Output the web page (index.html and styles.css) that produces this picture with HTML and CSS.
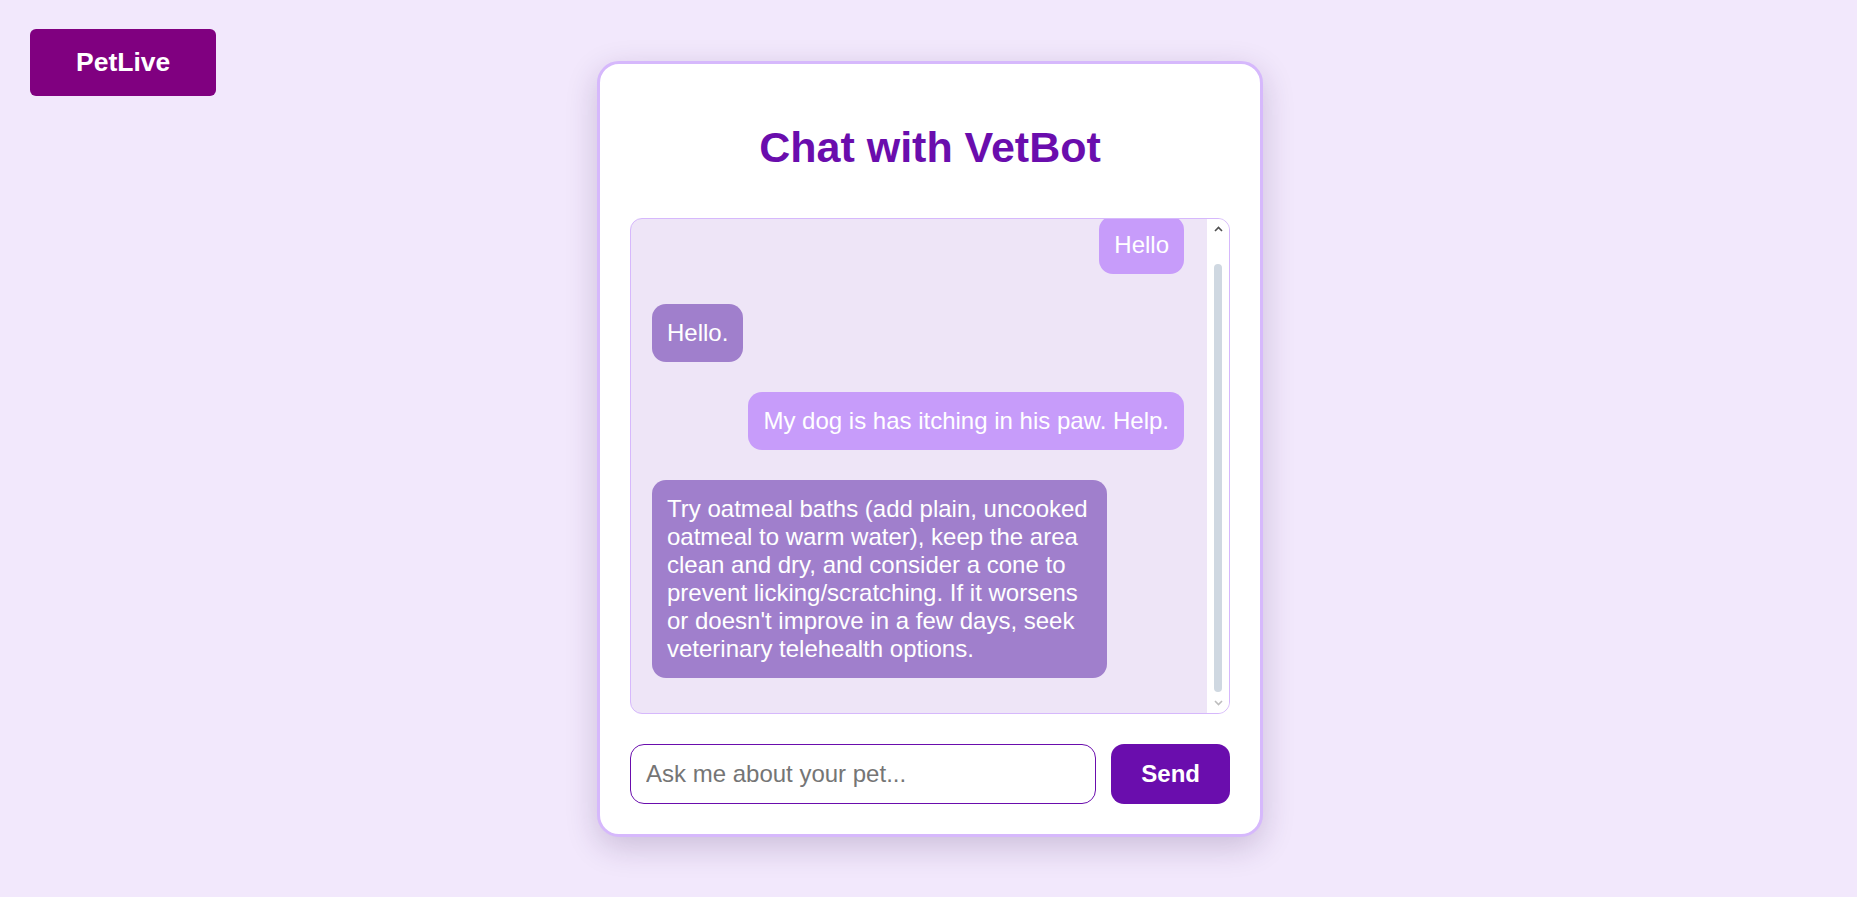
FILE: index.html
```html
<!DOCTYPE html>
<html lang="en">
<head>
<meta charset="utf-8">
<title>PetLive - Chat with VetBot</title>
<link rel="stylesheet" href="styles.css">
</head>
<body>
<button class="brand" type="button">PetLive</button>
<main class="page">
  <section class="chat-card">
    <h1 class="chat-title">Chat with VetBot</h1>
    <div class="chat-box">
      <div class="messages" id="messages">
        <div class="msg msg-user">Hello</div>
        <div class="msg msg-bot">Hello.</div>
        <div class="msg msg-user">My dog is has itching in his paw. Help.</div>
        <div class="msg msg-bot">Try oatmeal baths (add plain, uncooked oatmeal to warm water), keep the area clean and dry, and consider a cone to prevent licking/scratching. If it worsens or doesn't improve in a few days, seek veterinary telehealth options.</div>
      </div>
      <div class="scrollbar" aria-hidden="true">
        <div class="sb-btn">
          <svg width="9" height="6" viewBox="0 0 9 6"><path d="M1 5 L4.5 1.5 L8 5" fill="none" stroke="#4f4f4f" stroke-width="1.6"/></svg>
        </div>
        <div class="sb-track"><div class="sb-thumb"></div></div>
        <div class="sb-btn">
          <svg width="9" height="6" viewBox="0 0 9 6"><path d="M1 1 L4.5 4.5 L8 1" fill="none" stroke="#bdbdbd" stroke-width="1.6"/></svg>
        </div>
      </div>
    </div>
    <form class="composer" onsubmit="return false;">
      <input class="composer-input" type="text" placeholder="Ask me about your pet..." autofocus>
      <button class="send-btn" type="submit">Send</button>
    </form>
  </section>
</main>
</body>
</html>
```

FILE: styles.css
```css
* { box-sizing: border-box; }

html, body {
  margin: 0;
  padding: 0;
}

body {
  background: #f2e8fc;
  font-family: "Liberation Sans", Arial, sans-serif;
  min-height: 100vh;
}

.brand {
  position: absolute;
  top: 29px;
  left: 30px;
  background: #800080;
  color: #fff;
  border: none;
  border-radius: 6px;
  font-family: "Liberation Sans", Arial, sans-serif;
  font-weight: bold;
  font-size: 26.5px;
  line-height: 31px;
  padding: 18px 46px;
  cursor: pointer;
}

.page {
  min-height: 100vh;
  display: flex;
  align-items: center;
  justify-content: center;
}

.chat-card {
  width: 666px;
  background: #fff;
  border: 3px solid #d6b8fc;
  border-radius: 22px;
  padding: 30px;
  box-shadow: 0 10px 32px rgba(50, 20, 80, 0.2);
  margin-left: 3px;
}

.chat-title {
  margin: 29px 0 46px;
  text-align: center;
  color: #6a0dad;
  font-size: 43px;
  font-weight: bold;
  line-height: normal;
}

.chat-box {
  height: 496px;
  border: 1px solid #d6b8fc;
  border-radius: 12px;
  background: #eee5f7;
  overflow: hidden;
  display: flex;
  margin-bottom: 30px;
}

.messages {
  flex: 1;
  min-width: 0;
  overflow: hidden;
  display: flex;
  flex-direction: column;
  justify-content: flex-end;
  padding: 20px 23px 20px 21px;
}

.msg {
  flex: none;
  margin: 15px 0;
  padding: 15px;
  border-radius: 14px;
  color: #fff;
  font-size: 24px;
  line-height: normal;
  max-width: 85.5%;
}

.msg-user {
  align-self: flex-end;
  background: #c79cfa;
}

.msg-bot {
  align-self: flex-start;
  background: #a07fcc;
}

.scrollbar {
  width: 22px;
  flex: none;
  background: #fff;
  display: flex;
  flex-direction: column;
  align-items: center;
}

.sb-btn {
  height: 20px;
  flex: none;
  display: flex;
  align-items: center;
  justify-content: center;
}

.sb-track {
  flex: 1;
  display: flex;
  flex-direction: column;
  justify-content: flex-end;
  padding-bottom: 1px;
}

.sb-thumb {
  width: 8px;
  height: 428px;
  border-radius: 4px;
  background: #cfd8e1;
}

.composer {
  display: flex;
  gap: 15px;
  margin: 0;
}

.composer-input {
  flex: 1;
  min-width: 0;
  border: 1px solid #6a0dad;
  border-radius: 14px;
  padding: 15px;
  font-family: "Liberation Sans", Arial, sans-serif;
  font-size: 24px;
  line-height: normal;
  color: #333;
  caret-color: #6a0dad;
  outline: none;
  background: #fff;
}

.composer-input::placeholder {
  color: #757575;
}

.send-btn {
  background: #6a0dad;
  color: #fff;
  border: none;
  border-radius: 13px;
  padding: 15px 30px;
  font-family: "Liberation Sans", Arial, sans-serif;
  font-weight: bold;
  font-size: 24px;
  line-height: normal;
  cursor: pointer;
}
```
